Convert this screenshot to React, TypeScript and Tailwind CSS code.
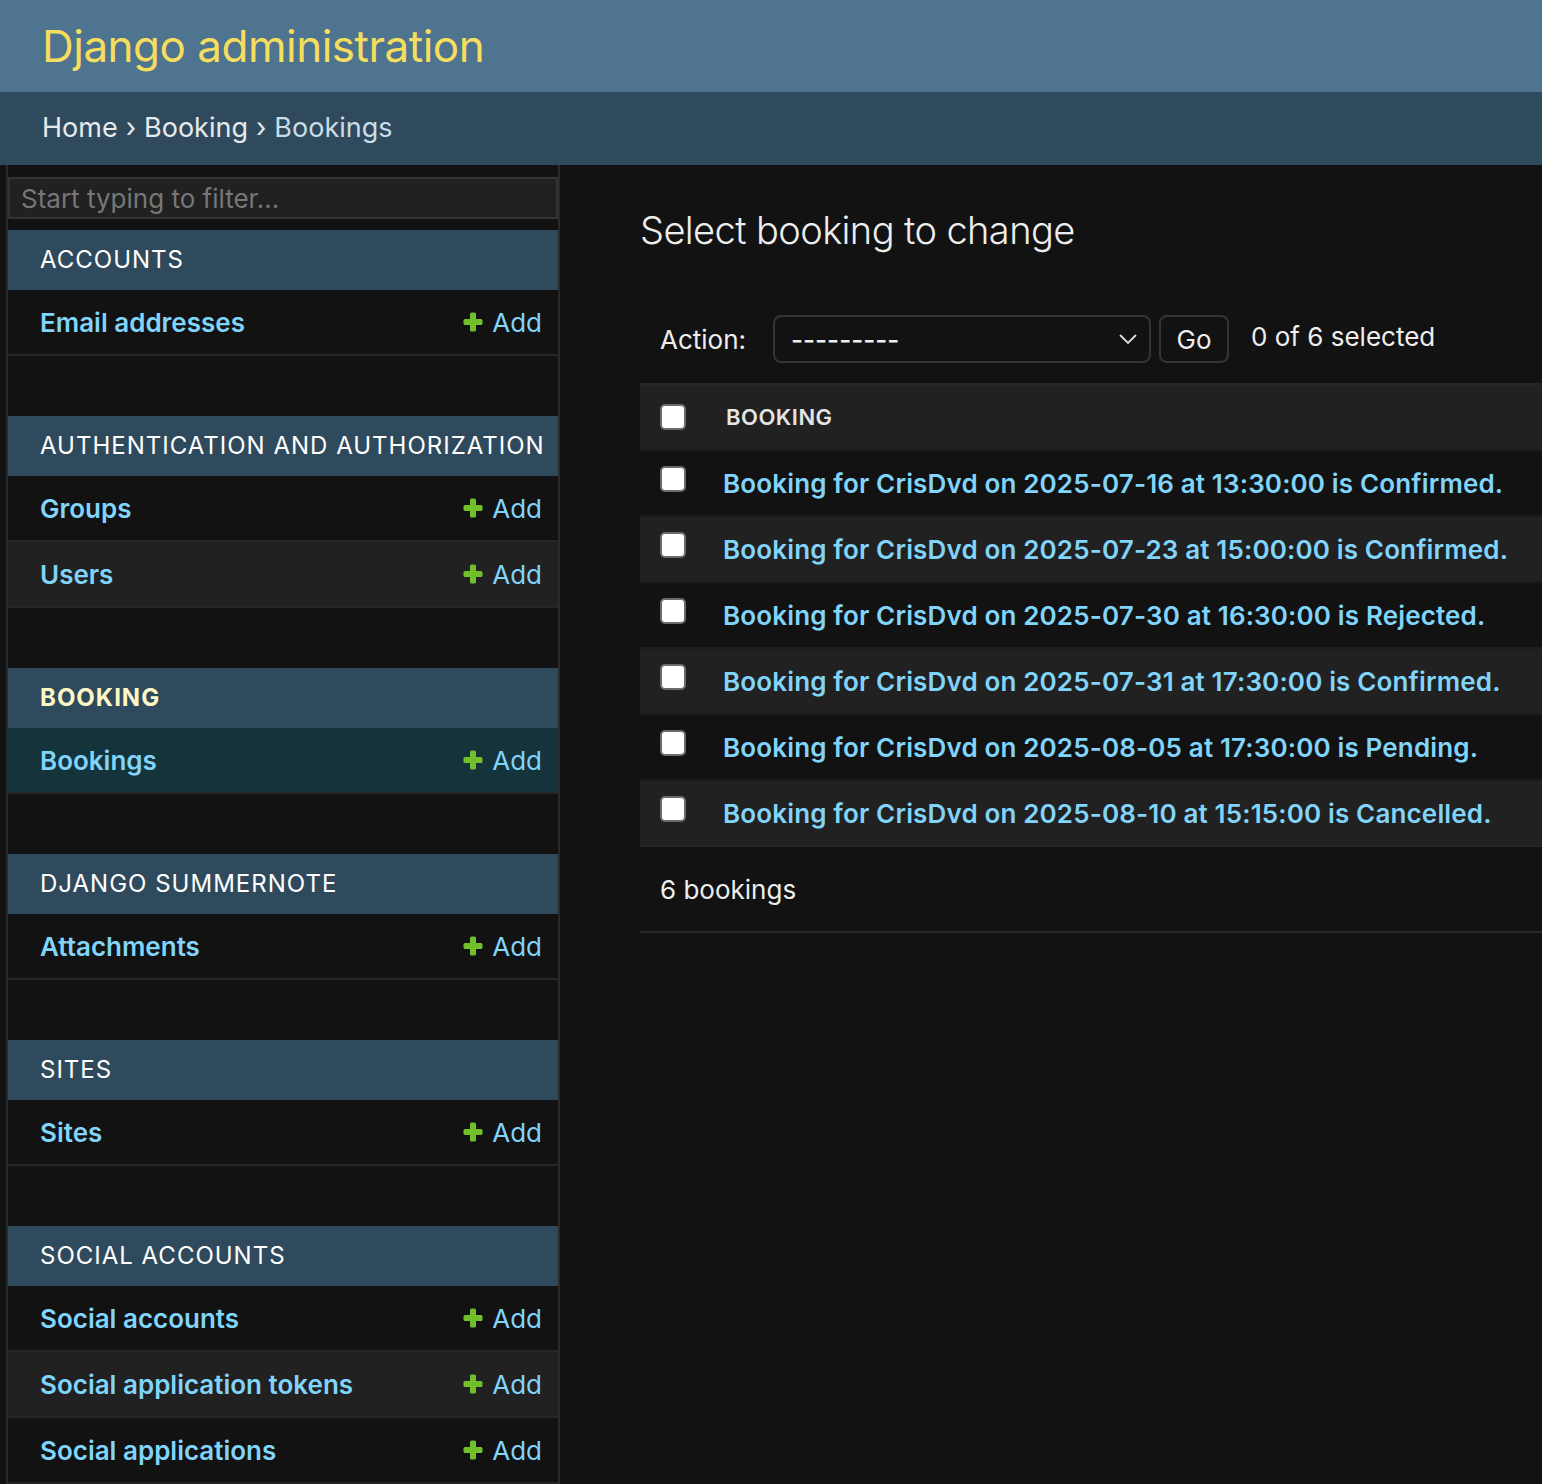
import React from "react";

type Model = { name: string; current?: boolean };
type Module = { title: string; current?: boolean; models: Model[] };

const modules: Module[] = [
  { title: "Accounts", models: [{ name: "Email addresses" }] },
  { title: "Authentication and Authorization", models: [{ name: "Groups" }, { name: "Users" }] },
  { title: "Booking", current: true, models: [{ name: "Bookings", current: true }] },
  { title: "Django Summernote", models: [{ name: "Attachments" }] },
  { title: "Sites", models: [{ name: "Sites" }] },
  {
    title: "Social Accounts",
    models: [{ name: "Social accounts" }, { name: "Social application tokens" }, { name: "Social applications" }],
  },
];

const bookings = [
  "Booking for CrisDvd on 2025-07-16 at 13:30:00 is Confirmed.",
  "Booking for CrisDvd on 2025-07-23 at 15:00:00 is Confirmed.",
  "Booking for CrisDvd on 2025-07-30 at 16:30:00 is Rejected.",
  "Booking for CrisDvd on 2025-07-31 at 17:30:00 is Confirmed.",
  "Booking for CrisDvd on 2025-08-05 at 17:30:00 is Pending.",
  "Booking for CrisDvd on 2025-08-10 at 15:15:00 is Cancelled.",
];

const PlusIcon = () => (
  <svg width="20" height="20" viewBox="0 0 20 20" className="shrink-0">
    <rect x="7" y="0.5" width="6" height="19" rx="1.5" fill="#70bf2b" />
    <rect x="0.5" y="7" width="19" height="6" rx="1.5" fill="#70bf2b" />
  </svg>
);

const Checkbox = () => (
  <div className="h-[26px] w-[26px] rounded-[5px] border-2 border-[#6b6b6b] bg-white" />
);

const Sidebar = () => (
  <nav className="ml-[6px] w-[554px] shrink-0 border-x-2 border-[#2a2a2a] pt-[12px]">
    <div className="mb-[11px] flex h-[42px] items-center border-2 border-[#333] bg-[#212121] px-[11px] text-[26px] text-[#777]">
      Start typing to filter...
    </div>
    {modules.map((m) => (
      <div key={m.title} className="mb-[60px]">
        <div
          className={`flex h-[60px] items-center whitespace-nowrap bg-[#2f4a5c] px-[32px] text-[24px] uppercase tracking-[1px] ${
            m.current ? "font-bold text-[#fdf8c6]" : "text-white"
          }`}
        >
          {m.title}
        </div>
        {m.models.map((r, i) => (
          <div
            key={r.name}
            className={`flex h-[66px] items-center justify-between border-b-2 border-[#262626] pl-[32px] pr-[16px] ${
              r.current ? "bg-[#15333a]" : i % 2 === 1 ? "bg-[#212121]" : "bg-[#121212]"
            }`}
          >
            <span className="text-[26px] font-semibold text-[#81d4fa]">{r.name}</span>
            <span className="flex items-center gap-[9px] text-[26px] text-[#81d4fa]">
              <PlusIcon />
              Add
            </span>
          </div>
        ))}
      </div>
    ))}
  </nav>
);

export default function App() {
  return (
    <div
      className="min-h-[1484px] bg-[#121212] text-[#eeeeee]"
      style={{ fontFamily: "Inter, 'Noto Sans', sans-serif" }}
    >
      <header className="flex h-[92px] items-center bg-[#4f7490] px-[42px]">
        <h1 className="text-[44px] font-normal tracking-[-0.5px] text-[#f5dd5d]">Django administration</h1>
      </header>
      <div className="flex h-[73px] items-center bg-[#2f4a5c] px-[42px] text-[27px] text-[#e6eaed]">
        <span>Home</span>
        <span className="mx-[8px]">›</span>
        <span>Booking</span>
        <span className="mx-[8px]">›</span>
        <span className="text-[#c8dde9]">Bookings</span>
      </div>
      <div className="flex">
        <Sidebar />
        <main className="flex-1 pl-[80px] pt-[41px]">
          <h1 className="text-[38px] font-light leading-[48px] tracking-[-0.6px] text-[#eeeeee]">
            Select booking to change
          </h1>
          <div className="mt-[61px] flex h-[48px] items-center pl-[20px] text-[26px]">
            <span>Action:</span>
            <div className="ml-[27px] flex h-[48px] w-[378px] items-center justify-between rounded-[8px] border-2 border-[#353535] pl-[16px] pr-[12px]">
              <span className="font-medium">---------</span>
              <svg width="18" height="10" viewBox="0 0 18 10">
                <path d="M1 1l8 8 8-8" fill="none" stroke="#ddd" strokeWidth="1.8" />
              </svg>
            </div>
            <div className="ml-[8px] flex h-[48px] w-[70px] items-center justify-center rounded-[8px] border-2 border-[#353535]">
              Go
            </div>
            <span className="ml-[22px] -mt-[6px]">0 of 6 selected</span>
          </div>
          <div className="mt-[20px] border-t-2 border-[#272727]">
            <div className="flex h-[64px] items-center bg-[#212121] pl-[20px]">
              <Checkbox />
              <span className="ml-[40px] text-[22px] font-semibold uppercase tracking-[0.5px] text-[#e5e5e5]">
                Booking
              </span>
            </div>
            {bookings.map((b, i) => (
              <div
                key={b}
                className={`flex h-[66px] items-center border-t-2 border-[#1c1c1c] pl-[20px] ${
                  i % 2 === 1 ? "bg-[#212121]" : "bg-[#121212]"
                }`}
              >
                <div className="-mt-[8px]">
                  <Checkbox />
                </div>
                <span className="ml-[37px] text-[26px] font-semibold tracking-[0.15px] text-[#81d4fa]">{b}</span>
              </div>
            ))}
            <div className="flex h-[88px] items-center border-y-2 border-[#272727] pl-[20px] text-[26px]">
              6 bookings
            </div>
          </div>
        </main>
      </div>
    </div>
  );
}
